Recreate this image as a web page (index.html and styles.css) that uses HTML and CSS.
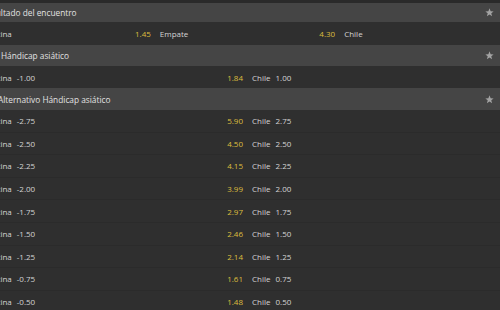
FILE: index.html
```html
<!DOCTYPE html>
<html lang="es">
<head>
<meta charset="utf-8">
<link rel="stylesheet" href="styles.css">
</head>
<body>
<div class="board">
  <section class="market">
    <div class="mkt-head first">
      <span class="mkt-title t-result">Resultado del encuentro</span>
      <svg class="star" viewBox="0 0 10 10"><path d="M5 0.4 L6.25 3.55 L9.6 3.75 L7 5.9 L7.85 9.2 L5 7.35 L2.15 9.2 L3 5.9 L0.4 3.75 L3.75 3.55 Z"/></svg>
    </div>
    <div class="sel-row three tall">
      <div class="sel"><span class="name">Argentina</span><span class="odd">1.45</span></div>
      <div class="sel"><span class="name">Empate</span><span class="odd">4.30</span></div>
      <div class="sel"><span class="name">Chile</span><span class="odd"></span></div>
    </div>
  </section>

  <section class="market">
    <div class="mkt-head">
      <span class="mkt-title t-hcp">Hándicap asiático</span>
      <svg class="star" viewBox="0 0 10 10"><path d="M5 0.4 L6.25 3.55 L9.6 3.75 L7 5.9 L7.85 9.2 L5 7.35 L2.15 9.2 L3 5.9 L0.4 3.75 L3.75 3.55 Z"/></svg>
    </div>
    <div class="sel-row two">
      <div class="sel"><span class="name">Argentina<span class="line">-1.00</span></span><span class="odd">1.84</span></div>
      <div class="sel"><span class="name">Chile<span class="line">1.00</span></span><span class="odd"></span></div>
    </div>
  </section>

  <section class="market">
    <div class="mkt-head h3">
      <span class="mkt-title t-alt">Alternativo Hándicap asiático</span>
      <svg class="star" viewBox="0 0 10 10"><path d="M5 0.4 L6.25 3.55 L9.6 3.75 L7 5.9 L7.85 9.2 L5 7.35 L2.15 9.2 L3 5.9 L0.4 3.75 L3.75 3.55 Z"/></svg>
    </div>
    <div class="sel-row two alt"><div class="sel"><span class="name">Argentina<span class="line">-2.75</span></span><span class="odd">5.90</span></div><div class="sel"><span class="name">Chile<span class="line">2.75</span></span></div></div>
    <div class="sel-row two alt"><div class="sel"><span class="name">Argentina<span class="line">-2.50</span></span><span class="odd">4.50</span></div><div class="sel"><span class="name">Chile<span class="line">2.50</span></span></div></div>
    <div class="sel-row two alt"><div class="sel"><span class="name">Argentina<span class="line">-2.25</span></span><span class="odd">4.15</span></div><div class="sel"><span class="name">Chile<span class="line">2.25</span></span></div></div>
    <div class="sel-row two alt"><div class="sel"><span class="name">Argentina<span class="line">-2.00</span></span><span class="odd">3.99</span></div><div class="sel"><span class="name">Chile<span class="line">2.00</span></span></div></div>
    <div class="sel-row two alt"><div class="sel"><span class="name">Argentina<span class="line">-1.75</span></span><span class="odd">2.97</span></div><div class="sel"><span class="name">Chile<span class="line">1.75</span></span></div></div>
    <div class="sel-row two alt"><div class="sel"><span class="name">Argentina<span class="line">-1.50</span></span><span class="odd">2.46</span></div><div class="sel"><span class="name">Chile<span class="line">1.50</span></span></div></div>
    <div class="sel-row two alt"><div class="sel"><span class="name">Argentina<span class="line">-1.25</span></span><span class="odd">2.14</span></div><div class="sel"><span class="name">Chile<span class="line">1.25</span></span></div></div>
    <div class="sel-row two alt"><div class="sel"><span class="name">Argentina<span class="line">-0.75</span></span><span class="odd">1.61</span></div><div class="sel"><span class="name">Chile<span class="line">0.75</span></span></div></div>
    <div class="sel-row two alt"><div class="sel"><span class="name">Argentina<span class="line">-0.50</span></span><span class="odd">1.48</span></div><div class="sel"><span class="name">Chile<span class="line">0.50</span></span></div></div>
  </section>
</div>
</body>
</html>
```

FILE: styles.css
```css
html, body {
  margin: 0;
  padding: 0;
  background: #2a2a2a;
  overflow: hidden;
}
body {
  padding-top: 3px;
  font-family: "Open Sans", "Noto Sans", sans-serif;
  color: #d6d6d6;
  width: 500px;
  height: 310px;
  box-sizing: border-box;
}
.board {
  margin-left: -29px;
  width: 553px;
}
.mkt-head {
  display: flex;
  align-items: center;
  justify-content: space-between;
  height: 21px;
  background: #454545;
  padding: 0 30px 0 30px;
  box-sizing: border-box;
}
.mkt-head.first { height: 19px; }
.mkt-head.h3 { height: 22px; }
.mkt-title {
  font-size: 8.3px;
  color: #e2e2e2;
  white-space: nowrap;
}
.t-result { margin-left: -19px; }
.t-hcp { margin-left: 0; }
.t-alt { margin-left: -3px; }
.star {
  width: 9px;
  height: 9px;
  fill: #a3a3a3;
}
.sel-row {
  display: grid;
  background: #2f2f2f;
  height: 22px;
  font-size: 8px;
}
.sel-row.tall { height: 23px; }
.sel-row.three { grid-template-columns: repeat(3, 1fr); }
.sel-row.two { grid-template-columns: repeat(2, 1fr); }
.sel-row.alt {
  height: 22.6px;
  box-sizing: border-box;
  border-bottom: 1px solid #2b2b2b;
}
.sel {
  display: flex;
  align-items: center;
  justify-content: space-between;
  padding: 0 4.5px;
  white-space: nowrap;
}
.name { color: #d4d4d4; }
.line { margin-left: 5px; }
.odd { color: #dcbd3e; }
```
